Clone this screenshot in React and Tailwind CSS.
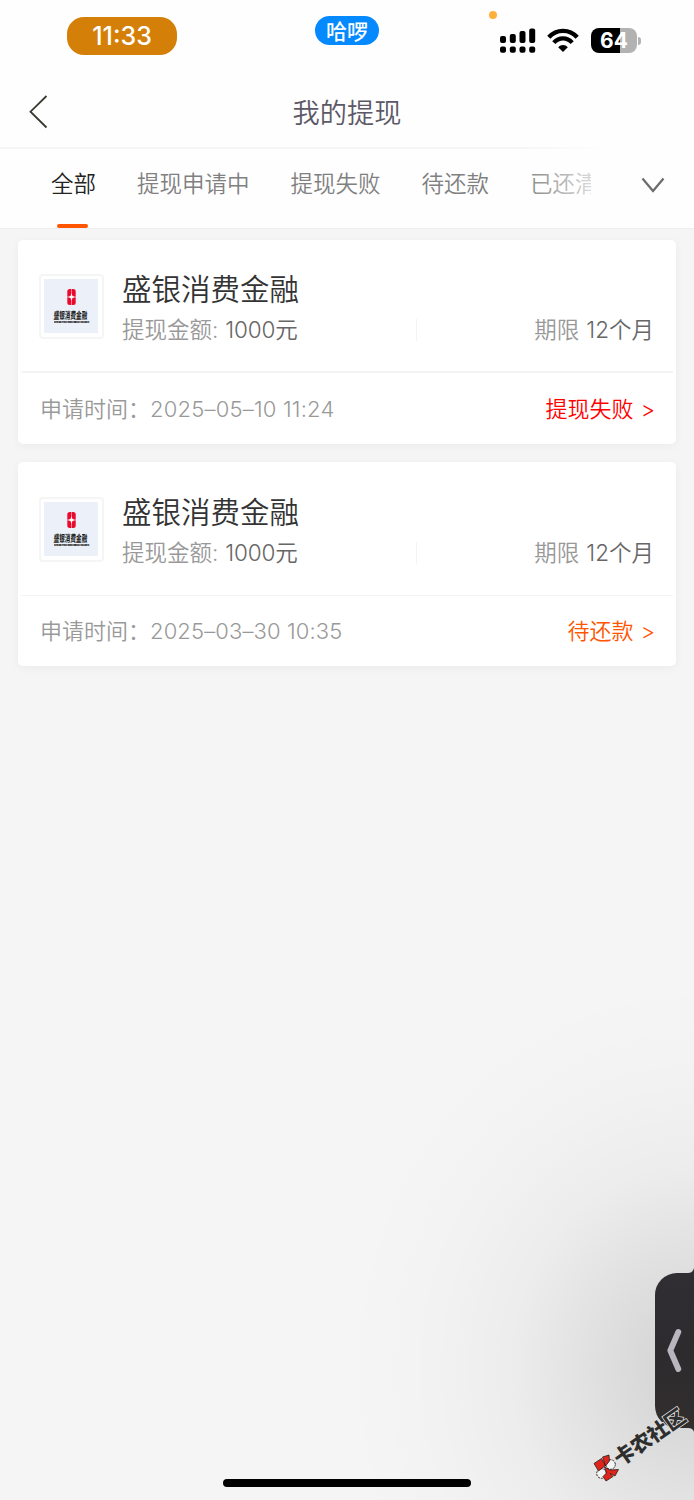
import React from "react";

const records = [
  { name: "盛银消费金融", amount: "1000元", term: "12个月", time: "2025–05–10 11:24", tracking: "tracking-[0.200px]", body: "h-[133px] border-b-2", footer: "h-[71px]", status: "提现失败", tone: "text-[#ff0000]" },
  { name: "盛银消费金融", amount: "1000元", term: "12个月", time: "2025–03–30 10:35", tracking: "tracking-[0.120px]", body: "h-[134px] border-b pt-px", footer: "h-[70px]", status: "待还款", tone: "text-[#ff5500]" },
];

function StatusBar() {
  return (
    <div className="relative flex h-[75px] shrink-0 items-start">
      <div className="ml-[67px] mt-[17px] flex h-[38px] w-[110px] items-center justify-center rounded-[17px] bg-[#d47f08] text-[25px] font-medium leading-[38px] text-white">
        11:33
      </div>
      <div className="ml-[138px] mt-4 flex h-[29px] w-[64px] items-center justify-center rounded-full bg-[#0589ff] text-[21px] font-medium leading-[29px] text-white">
        <span className="mt-0.5">哈啰</span>
      </div>
      <span className="absolute left-[489px] top-[11px] size-[7.500px] rounded-full bg-[#ffb03a]" />
      <div className="ml-[121px] mt-[28px] flex items-start">
        <svg width="36" height="25" viewBox="0 0 36 25" fill="#000">
          <rect x="0" y="8" width="6" height="7" rx="2" />
          <rect x="9.8" y="6" width="6" height="9" rx="2" />
          <rect x="19.5" y="3" width="6" height="12" rx="2" />
          <rect x="29.2" y="0.5" width="6" height="14.5" rx="2" />
          <rect x="0" y="18.5" width="6" height="6.3" rx="2" />
          <rect x="9.8" y="18.5" width="6" height="6.3" rx="2" />
          <rect x="19.5" y="18.5" width="6" height="6.3" rx="2" />
          <rect x="29.2" y="18.5" width="6" height="6.3" rx="2" />
        </svg>
        <svg className="ml-[11px]" width="32" height="25" viewBox="0 0 32 25" fill="none" stroke="#000" strokeWidth="4.300">
          <path d="M1.800 9.300 C9.500 0.700 22.500 0.700 30.200 9.300" />
          <path d="M6.800 14.600 C12 9 20 9 25.200 14.600" />
          <path d="M16 24 L11.200 19.200 C14 16.200 18 16.200 20.800 19.200 Z" fill="#000" stroke="none" />
        </svg>
        <div className="ml-3 flex items-center">
          <div className="flex h-[25px] w-[46px] items-center justify-center rounded-[8px] bg-[linear-gradient(90deg,#000_29px,#b2b2b2_29px)] text-[21px] font-bold leading-[25px] text-white">
            64
          </div>
          <span className="ml-px h-2 w-[3px] rounded-r-full bg-[#b2b2b2]" />
        </div>
      </div>
    </div>
  );
}

function CompanyLogo() {
  return (
    <div className="mt-[34px] flex size-[65px] shrink-0 items-start rounded-[4px] border-2 border-[#f5f5f5] bg-white pl-[3px] pt-[3px]">
      <div className="flex size-[54px] flex-col items-center bg-[#ecf1f9]">
        <svg className="mt-[10px] shrink-0" width="9" height="16" viewBox="0 0 9 16">
          <rect x="0.300" y="0" width="8.400" height="16" rx="2.500" fill="#eb0a2d" />
          <path d="M4.500 4.200 L5.500 7 L8 8 L5.500 9 L4.500 11.800 L3.500 9 L1 8 L3.500 7 Z" fill="#fff" />
          <path d="M4.500 0 V16 M0 8 H9" stroke="#fff" strokeWidth="0.500" />
        </svg>
        <div className="mt-[4px] h-[11px] w-[34px]">
          <div className="w-[60px] origin-top-left -skew-x-6 scale-x-[0.56] whitespace-nowrap text-[10px] font-bold leading-[12px] text-[#151515]">盛银消费金融</div>
        </div>
        <div className="mt-px h-[3px] w-[34px]">
          <div className="w-[136px] origin-top-left scale-[0.25] whitespace-nowrap text-[9px] font-black leading-[10px] tracking-[-0.200px] text-black">SHENGYIN CONSUMER FINANCE</div>
        </div>
      </div>
    </div>
  );
}

function RecordCard({ record }) {
  return (
    <div className="flex h-[204px] flex-col rounded-[5px] bg-white px-[3px] shadow-[0_2px_10px_rgba(0,0,0,0.045)]">
      <div className={"flex border-[#f4f4f4] pl-[18px] pr-[19px] " + record.body}>
        <CompanyLogo />
        <div className="ml-[18px] flex flex-1 flex-col pt-[31px]">
          <div className="text-[29.500px] leading-[36px] text-[#333]">{record.name}</div>
          <div className="mt-[7px] flex h-8 items-center text-[22.500px] leading-8">
            <span className="text-[#999]">提现金额:</span>
            <span className="ml-[7px] tracking-[-0.150px] text-[#666]">{record.amount}</span>
            <span className="absolute left-[416px] h-[22px] w-px bg-[#f3f3f3]" />
            <span className="ml-auto text-[#999]">期限</span>
            <span className="ml-[7px] text-[#666]">{record.term}</span>
          </div>
        </div>
      </div>
      <div className={"flex items-center justify-between pl-[19px] pr-[18px] text-[22px] leading-8 " + record.footer}>
        <div className="flex text-[#999]">
          <span>申请时间：</span>
          <span className={record.tracking}>{record.time}</span>
        </div>
        <div className={"flex " + record.tone}>
          <span>{record.status}</span>
          <span className="ml-[7px]">&gt;</span>
        </div>
      </div>
    </div>
  );
}

function SidePanel() {
  return (
    <div className="absolute left-[655px] top-[1273px] h-[155px] w-[39px] rounded-l-[22px] bg-[linear-gradient(180deg,#302e32,#2d2b2e_50%,#322e2e)]">
      <svg className="absolute -top-[5px] right-0" width="6" height="5" viewBox="0 0 6 5"><path d="M6 0 V5 H0 Q5 5 6 0Z" fill="#302e32" /></svg>
      <svg className="absolute -bottom-[4px] right-0" width="6" height="4" viewBox="0 0 6 4"><path d="M0 0 H6 V4 Q5 0 0 0Z" fill="#322e2e" /></svg>
      <svg className="absolute left-[11px] top-[55px]" width="16" height="45" viewBox="0 0 16 45" fill="none" stroke="#bab6c0" strokeWidth="5.800" strokeLinecap="round" strokeLinejoin="round">
        <path d="M12.300 4 L4.300 22.500 L12.300 41" />
      </svg>
    </div>
  );
}

function Watermark() {
  return (
    <>
      <svg className="absolute left-[592px] top-[1454px]" width="28" height="28" viewBox="0 0 28 28">
        <circle cx="18.500" cy="10.500" r="4.800" fill="#f4f4f4" stroke="#111" strokeWidth="0.900" strokeDasharray="2 1" />
        <circle cx="9.500" cy="19.500" r="4.800" fill="#f4f4f4" stroke="#111" strokeWidth="0.900" strokeDasharray="2 1" />
        <g fill="#df241c" stroke="#111" strokeWidth="0.700">
          <path d="M2 9.500 L9.500 4.500 L13.500 11.500 L6.500 17Z" />
          <path d="M10.500 3 L17 1 L17.500 7 L13.500 12Z" />
          <path d="M12.500 13 L18 16 L26.500 15.500 L23 22 L18 19.500 L21 22.500 L14 27 L11 22.500 L14.500 19Z" />
        </g>
      </svg>
      <div className="absolute left-[609px] top-[1425px] w-[80px] -rotate-[35deg] whitespace-nowrap text-center text-[20.500px] font-black leading-[26px] text-[#2e2e2e] [paint-order:stroke_fill] [-webkit-text-stroke:1.600px_#dedede]">
        卡农社区
      </div>
    </>
  );
}

export default function App() {
  return (
    <div className="relative flex h-[1500px] w-[694px] flex-col overflow-hidden bg-[#f5f5f5] font-['Inter','Noto_Sans_CJK_SC',sans-serif] font-[350]">
      <div className="flex flex-col bg-[#fefefe]">
        <StatusBar />
        <div className="relative flex h-[74px] items-center justify-center border-b-2 border-[#f6f6f6] pt-[5px] text-[27.200px] leading-9 text-[#5c5866]">
          <svg className="absolute left-[28px] top-[20px]" width="20" height="34" viewBox="0 0 20 34" fill="none" stroke="#3a382f" strokeWidth="1.800">
            <path d="M18.500 1 L2.500 16.700 L18.500 32.500" />
          </svg>
          我的提现
        </div>
        <div className="relative flex h-[80px] border-b border-[#ededf2] pl-[51px] pt-[19px] text-[22.500px] leading-8 text-[#808080]">
          <div className="flex w-[540px] gap-[41px] overflow-hidden whitespace-nowrap">
            <span className="text-[#222]">全部</span>
            <span>提现申请中</span>
            <span>提现失败</span>
            <span>待还款</span>
            <span>已还清</span>
          </div>
          <span className="absolute bottom-0 left-[57px] h-1 w-[31px] rounded-full bg-[#ff5500]" />
          <span className="absolute -top-[3px] left-[520px] h-[82px] w-[174px] bg-[linear-gradient(90deg,rgba(254,254,254,0),rgba(254,254,254,0.700)_71px,#fefefe_80px)]" />
          <svg className="absolute left-[641px] top-[28px]" width="24" height="17" viewBox="0 0 24 17" fill="none" stroke="#6b6b6b" strokeWidth="2.200">
            <path d="M1.500 1.500 L12 14 L22.500 1.500" />
          </svg>
        </div>
      </div>
      <div className="flex flex-col gap-[18px] pl-[18px] pr-[18px] pt-[11px]">
        {records.map((record) => (
          <RecordCard key={record.time} record={record} />
        ))}
      </div>
      <div className="absolute bottom-0 right-0 h-[620px] w-[420px] bg-[radial-gradient(350px_390px_at_420px_490px,rgba(0,0,0,0.130)_0%,rgba(0,0,0,0.118)_14%,rgba(0,0,0,0.080)_32%,rgba(0,0,0,0.035)_52%,rgba(0,0,0,0.012)_75%,transparent_100%)]" />
      <SidePanel />
      <Watermark />
      <div className="absolute bottom-[13px] left-[223px] h-2 w-[248px] rounded-full bg-black" />
    </div>
  );
}
